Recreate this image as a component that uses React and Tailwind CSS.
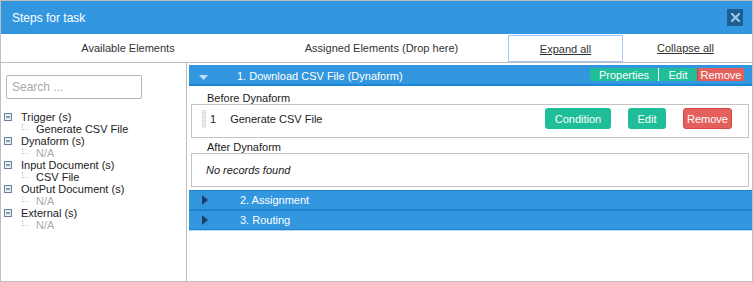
import React from 'react';

const tree = [
    { label: 'Trigger (s)', child: 'Generate CSV File' },
    { label: 'Dynaform (s)', child: 'N/A' },
    { label: 'Input Document (s)', child: 'CSV File' },
    { label: 'OutPut Document (s)', child: 'N/A' },
    { label: 'External (s)', child: 'N/A' }
];

const MinusBox = () => (
    <svg width="8" height="8" viewBox="0 0 8 8" className="shrink-0">
        <rect x="0.5" y="0.5" width="7" height="7" fill="#e8eef6" stroke="#6a7f9c" />
        <rect x="2" y="3.5" width="4" height="1" fill="#2c4a70" />
    </svg>
);

const Elbow = () => (
    <span className="w-[6px] h-[6px] border-l border-b border-dotted border-[#c8c8c8] mb-[4px] shrink-0" />
);

const DragHandle = () => (
    <svg width="4" height="18" viewBox="0 0 4 18" className="shrink-0">
        {[0, 2, 4, 6, 8, 10, 12, 14, 16].map((y) => (
            <g key={y}>
                <rect x="0" y={y} width="1.5" height="1.5" fill="#d0d0d0" />
                <rect x="2.5" y={y} width="1.5" height="1.5" fill="#d0d0d0" />
            </g>
        ))}
    </svg>
);

const Section = ({ title }) => (
    <div className="h-[20px] bg-[#3397df] border-y border-[#1f80cc] flex items-center text-white">
        <svg width="6" height="10" viewBox="0 0 6 10" className="ml-[13px] shrink-0">
            <polygon points="0,0 6,5 0,10" fill="#1b3f66" />
        </svg>
        <span className="ml-[32px]">{title}</span>
    </div>
);

const App = () => {
    return (
        <div className="w-[753px] h-[282px] border border-[#bfbfbf] flex flex-col bg-white text-[11px] leading-[12px] text-[#222] font-['Liberation_Sans',Arial,sans-serif]">
            <div className="h-[33px] bg-[#3397df] flex items-center justify-between pl-[11px] pr-[9px] shrink-0">
                <span className="text-white text-[12px]">Steps for task</span>
                <div className="w-[16px] h-[17px] bg-[#1d5f93] flex items-center justify-center">
                    <svg width="9" height="9" viewBox="0 0 9 9">
                        <path d="M1 1 L8 8 M8 1 L1 8" stroke="#9cc8ec" strokeWidth="2.2" strokeLinecap="square" />
                    </svg>
                </div>
            </div>

            <div className="h-[29px] flex items-stretch border-b border-[#bdbdbd] shrink-0 text-[#333]">
                <div className="w-[254px] flex items-center justify-center">Available Elements</div>
                <div className="w-[253px] flex items-center justify-center">Assigned Elements (Drop here)</div>
                <div className="w-[115px] mt-[1px] border border-[#a9c5fb] flex items-center justify-center underline">Expand all</div>
                <div className="flex-1 flex items-center justify-center pr-[4px] underline">Collapse all</div>
            </div>

            <div className="flex-1 flex min-h-0">
                <div className="w-[186px] border-r border-[#bdbdbd] shrink-0 pt-[12px] pl-[5px]">
                    <input
                        placeholder="Search ..."
                        className="w-[136px] h-[24px] border border-[#b5b5b5] rounded-[2px] px-[5px] text-[12px] placeholder:text-[#aaa] outline-none"
                    />
                    <div className="mt-[12px] -ml-[2px]">
                        {tree.map((t) => (
                            <div key={t.label}>
                                <div className="h-[12px] flex items-center">
                                    <MinusBox />
                                    <span className="ml-[9px]">{t.label}</span>
                                </div>
                                <div className="h-[12px] flex items-center pl-[18px]">
                                    <Elbow />
                                    <span className={`ml-[8px] ${t.child === 'N/A' ? 'text-[#aaa]' : ''}`}>{t.child}</span>
                                </div>
                            </div>
                        ))}
                    </div>
                </div>

                <div className="flex-1 pt-[2px] pl-[2px]">
                    <div className="h-[21px] bg-[#3397df] border-b-2 border-[#1d86d6] flex items-center text-white">
                        <svg width="9" height="5" viewBox="0 0 9 5" className="ml-[10px] mt-[5px] shrink-0">
                            <polygon points="0,0 9,0 4.5,5" fill="#c4dff5" />
                        </svg>
                        <span className="ml-[29px] pt-[2px]">1. Download CSV File (Dynaform)</span>
                        <div className="ml-auto mr-[8px] flex h-[13px]">
                            <span className="w-[68px] bg-[#20bd99] flex items-center justify-center">Properties</span>
                            <span className="w-[1px] bg-white" />
                            <span className="w-[38px] bg-[#20bd99] flex items-center justify-center">Edit</span>
                            <span className="w-[47px] bg-[#e4605d] border-l border-[#c9403c] flex items-center justify-center">Remove</span>
                        </div>
                    </div>

                    <div className="pr-[3px] pl-[2px]">
                        <div className="pt-[6px] pl-[16px]">Before Dynaform</div>
                        <div className="h-[34px] border border-[#c4c4c4] flex items-start pt-[3px]">
                            <div className="h-[21px] flex items-center pl-[10px]">
                                <DragHandle />
                                <span className="ml-[4px]">1</span>
                                <span className="ml-[14px]">Generate CSV File</span>
                            </div>
                            <div className="ml-auto mr-[16px] flex gap-[17px] text-white">
                                <span className="w-[66px] h-[21px] rounded-[3px] bg-[#20bd99] flex items-center justify-center">Condition</span>
                                <span className="w-[38px] h-[21px] rounded-[3px] bg-[#20bd99] flex items-center justify-center">Edit</span>
                                <span className="w-[49px] h-[21px] rounded-[3px] bg-[#e4605d] border border-[#d34844] flex items-center justify-center">Remove</span>
                            </div>
                        </div>
                        <div className="pt-[3px] pl-[16px]">After Dynaform</div>
                        <div className="h-[34px] border border-[#c4c4c4] flex items-center pl-[14px] italic">No records found</div>
                    </div>

                    <div className="mt-[3px]">
                        <Section title="2. Assignment" />
                        <Section title="3. Routing" />
                        <div className="h-[1px] bg-[#b9dbf3]" />
                    </div>
                </div>
            </div>
        </div>
    );
};

export default App;
